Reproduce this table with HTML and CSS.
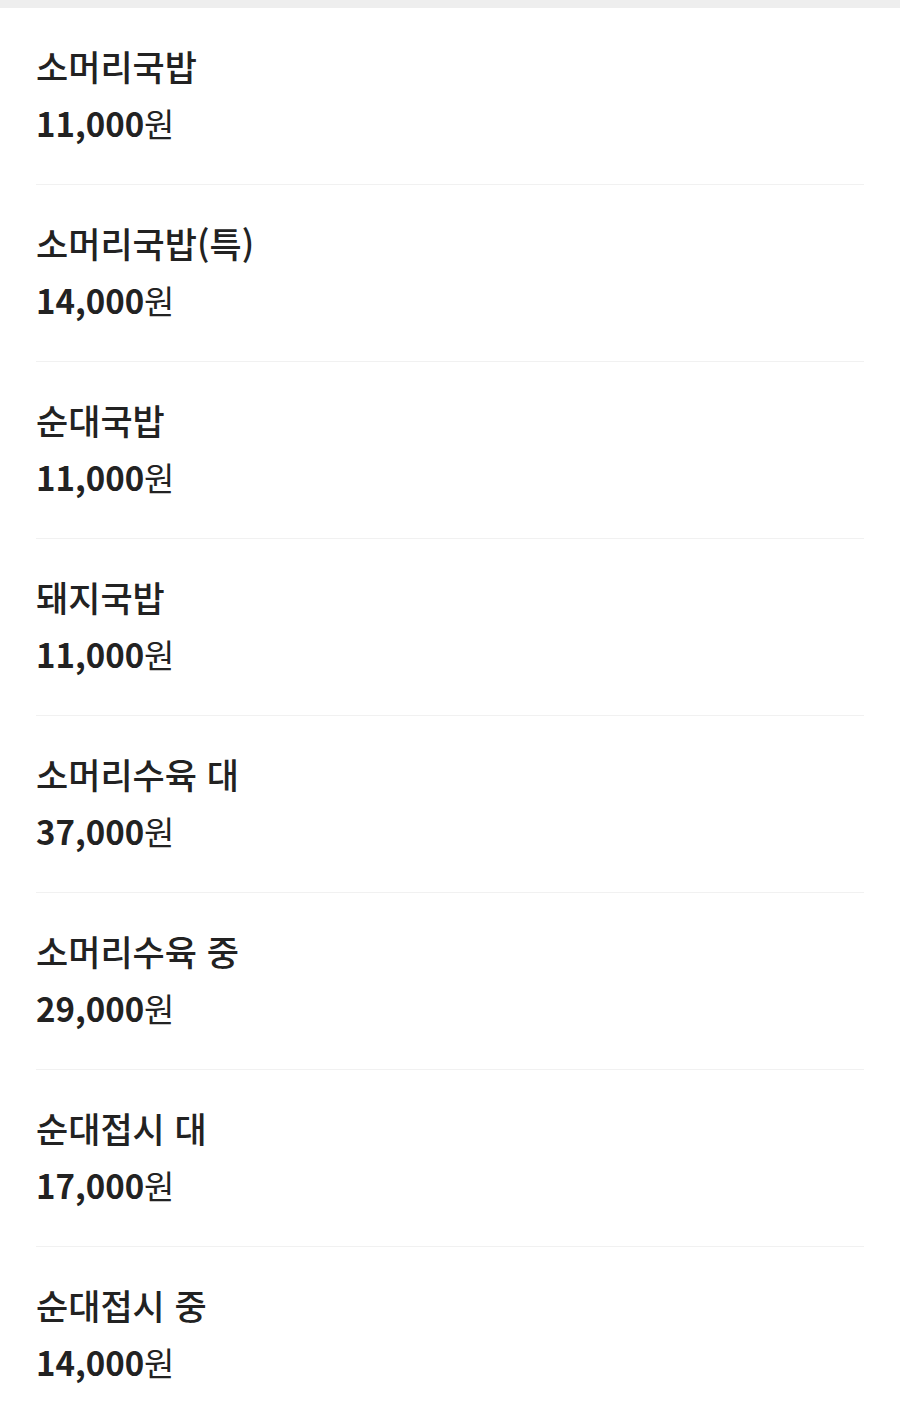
FILE: index.html
```html
<!DOCTYPE html>
<html lang="ko">
<head>
    <meta charset="UTF-8">
    <meta name="viewport" content="width=device-width, initial-scale=1.0">
    <title>메뉴</title>
    <link rel="stylesheet" href="styles.css">
</head>
<body>
    <div class="top-bar"></div>
    <ul class="menu-list">
        <li class="menu-item">
            <div class="menu-name">소머리국밥</div>
            <div class="menu-price"><b>11,000</b>원</div>
        </li>
        <li class="menu-item">
            <div class="menu-name">소머리국밥(특)</div>
            <div class="menu-price"><b>14,000</b>원</div>
        </li>
        <li class="menu-item">
            <div class="menu-name">순대국밥</div>
            <div class="menu-price"><b>11,000</b>원</div>
        </li>
        <li class="menu-item">
            <div class="menu-name">돼지국밥</div>
            <div class="menu-price"><b>11,000</b>원</div>
        </li>
        <li class="menu-item">
            <div class="menu-name">소머리수육 대</div>
            <div class="menu-price"><b>37,000</b>원</div>
        </li>
        <li class="menu-item">
            <div class="menu-name">소머리수육 중</div>
            <div class="menu-price"><b>29,000</b>원</div>
        </li>
        <li class="menu-item">
            <div class="menu-name">순대접시 대</div>
            <div class="menu-price"><b>17,000</b>원</div>
        </li>
        <li class="menu-item">
            <div class="menu-name">순대접시 중</div>
            <div class="menu-price"><b>14,000</b>원</div>
        </li>
    </ul>
</body>
</html>
```

FILE: styles.css
```css
body {
    margin: 0;
    background-color: #fff;
    font-family: "Noto Sans CJK KR", "Noto Sans", sans-serif;
    color: #222;
}

.top-bar {
    height: 8px;
    background-color: #eeeeee;
}

.menu-list {
    list-style: none;
    margin: 0;
    padding: 0 36px;
}

.menu-item {
    padding: 36px 0 39px;
    border-bottom: 1px solid #f1f1f1;
}

.menu-item:last-child {
    border-bottom: none;
}

.menu-name {
    font-size: 35px;
    line-height: 44px;
    font-weight: 500;
}

.menu-price {
    font-size: 33px;
    line-height: 44px;
    margin-top: 13px;
    font-weight: 400;
}

.menu-price b {
    font-weight: 700;
}
```
